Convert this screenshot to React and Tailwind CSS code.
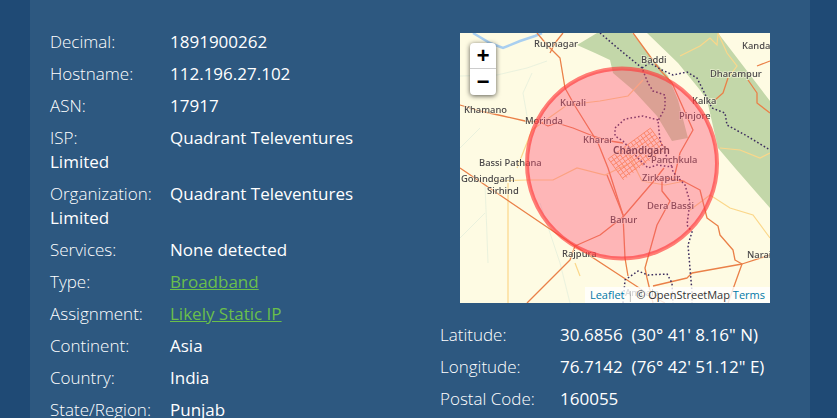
import React from 'react';

const leftRows = [
  ['Decimal:', '1891900262'],
  ['Hostname:', '112.196.27.102'],
  ['ASN:', '17917'],
  ['ISP:', 'Quadrant Televentures Limited'],
  ['Organization:', 'Quadrant Televentures Limited'],
  ['Services:', 'None detected'],
  ['Type:', 'Broadband', true],
  ['Assignment:', 'Likely Static IP', true],
  ['Continent:', 'Asia'],
  ['Country:', 'India'],
  ['State/Region:', 'Punjab'],
];

const rightRows = [
  ['Latitude:', '30.6856\u00a0 (30° 41\' 8.16" N)'],
  ['Longitude:', '76.7142\u00a0 (76° 42\' 51.12" E)'],
  ['Postal Code:', '160055'],
];

const Row = ({ label, value, link }) => (
  <div className="pb-2 leading-6">
    <span className="inline-block w-[120px] font-light">{label}</span>
    {link ? <a className="text-[#6abf4b] underline">{value}</a> : <span>{value}</span>}
  </div>
);

const roads = [
  'M77 0L88 13L100 25L105 55L115 73L138 110L148 135L163 182L165 225L168 243',
  'M103 0L95 10L90 20',
  'M0 72L20 78L43 83L65 88L80 89L88 93L97 90L113 95L133 103L150 108L163 110',
  'M0 135L115 213L167 247L190 262L205 270',
  'M115 213L110 227L67 270',
  'M115 213L140 202L163 184L193 149L204 135',
  'M202 145L202 158L210 168L197 192L185 235L187 245L193 270',
  'M147 142L163 182',
  'M205 145L223 148L240 157L247 185L258 193L260 202L273 217L275 227L282 231L310 222',
  'M193 253L227 245L232 240L282 231L268 270',
  'M173 0L200 37L212 50L233 97L220 120L214 145',
  'M255 67L263 60L268 45',
  'M288 47L297 60L297 70L310 80',
  'M297 33L310 28',
];

const yellowRoads = [
  'M220 23L240 13L250 5L257 12L258 0L267 20L277 33L268 45',
  'M183 47L168 63L140 68L107 72L72 97L57 135',
  'M48 150L48 270',
  'M33 148L67 147L93 147L117 135L145 142L170 130',
  'M260 115L280 117L300 125L310 120',
  'M230 177L250 162L270 175L293 182L310 205',
  'M168 120L182 148L205 152L225 148',
  'M115 230L120 243',
];

const border = [
  'M140 0L160 17L182 35L188 50L193 58L205 62L205 75L198 88L200 107L205 120L212 134',
  'M182 35L190 30L202 37L213 42L227 39L237 45L243 57L252 75L265 80L267 92L287 103L310 117',
  'M198 87L183 83L165 86L155 95L155 103L163 108L177 124L188 135L197 132L212 134L213 139L225 152L230 169L227 192L232 199L228 212L232 259L232 270',
  'M163 270L165 247L178 238L188 242L207 241L212 250L213 270',
];

const labels = [
  ['Rupnagar', 74, 14],
  ['Kandaghat', 282, 16],
  ['Baddi', 181, 30],
  ['Dharampur', 250, 44],
  ['Kurali', 100, 73],
  ['Kalka', 232, 71],
  ['Pinjore', 219, 86],
  ['Khamano', 4, 80],
  ['Morinda', 65, 91],
  ['Kharar', 123, 110],
  ['Panchkula', 191, 130],
  ['Bassi Pathana', 19, 133],
  ['Gobindgarh', 1, 149],
  ['Zirkapur', 182, 148],
  ['Sirhind', 27, 161],
  ['Dera Bassi', 187, 176],
  ['Banur', 150, 190],
  ['Rajpura', 102, 224],
  ['Narain', 287, 225],
  ['Ambala', 165, 263],
];

const grid = [0, 4, 8, 12, 16, 20, 24, 28, 32, 36, 40, 44, 48, 52];

const MapDrawing = () => (
  <svg viewBox="0 0 310 270" className="block h-[270px] w-[310px] bg-[#fefbe3]">
    <g className="blur-[0.4px]">
      <path d="M117 12L137 0L172 0L190 23L208 43L218 67L228 105L212 108L197 83L173 57L153 40L150 27L135 20Z" fill="#c3d7a9" />
      <path d="M187 0L218 30L240 57L247 67L258 115L275 135L310 175L310 68L258 0Z" fill="#c3d7a9" />
      <path d="M13 0L30 10L43 15L60 8L75 3L82 0" fill="none" stroke="#a9cff0" strokeWidth="2.5" />
      <path d="M0 43L37 42L67 35L87 28M72 40L63 60L67 83M0 115L20 95M80 170L100 230L110 270M25 150L28 230M0 205L25 180" fill="none" stroke="#e4efdc" strokeWidth="0.8" />
      {yellowRoads.map((d) => (
        <path key={d} d={d} fill="none" stroke="#fbd78a" strokeWidth="1.2" />
      ))}
      <g transform="rotate(-36 177 121)" stroke="#f8a961" strokeWidth="0.9">
        {grid.map((g) => (
          <path key={g} d={`M${151 + g} 108V134`} />
        ))}
        {grid.slice(0, 7).map((g) => (
          <path key={g} d={`M151 ${108 + g}H203`} />
        ))}
      </g>
      {roads.map((d) => (
        <path key={d} d={d} fill="none" stroke="#ea8048" strokeWidth="1.3" strokeLinejoin="round" />
      ))}
      {border.map((d) => (
        <path key={d} d={d} fill="none" stroke="#3c2c5e" strokeWidth="1.5" strokeDasharray="1.6 2.2" />
      ))}
      <g fontFamily="'Noto Sans', sans-serif" fontSize="9.4" fontWeight="500" fill="#484547" stroke="#fefbe3" strokeWidth="1.6" paintOrder="stroke" strokeOpacity="0.6">
        {labels.map(([name, x, y]) => (
          <text key={name} x={x} y={y}>{name}</text>
        ))}
        <text x="153" y="121" fontSize="10" fontWeight="600" fill="#3c3a3c">Chandigarh</text>
      </g>
    </g>
    <circle cx="162" cy="130.5" r="95" fill="#ff5075" fillOpacity="0.4" stroke="#ff3b3b" strokeOpacity="0.65" strokeWidth="4" />
  </svg>
);

const App = () => (
  <div className="h-[418px] w-[837px] overflow-hidden bg-[#1f4a75] pl-[30px] pr-[27px] text-[17px] text-white [font-family:'Open_Sans',sans-serif]">
    <div className="flex h-full bg-[#2d5880] px-5 pt-[30px]">
      <div className="w-[360px] flex-none">
        {leftRows.map(([label, value, link]) => (
          <Row key={label} label={label} value={value} link={link} />
        ))}
      </div>
      <div className="flex-1 pl-[30px] pt-[3px]">
        <div className="relative ml-5 h-[270px] w-[310px] overflow-hidden">
          <MapDrawing />
          <div className="absolute left-2.5 top-2.5 w-[26px] overflow-hidden rounded bg-white text-black shadow-[0_1px_5px_rgba(0,0,0,0.65)] [font-family:'Liberation_Mono',monospace]">
            <div className="flex h-[26px] items-center justify-center border-b border-[#ccc] pt-1 text-[22px] font-bold leading-none">+</div>
            <div className="flex h-[26px] items-center justify-center pt-1 text-[22px] font-bold leading-none">−</div>
          </div>
          <div className="absolute bottom-0 right-0 h-4 whitespace-nowrap bg-white/80 px-[5px] text-[11px] leading-4 text-[#333]">
            <a className="text-[#0078a8]">Leaflet</a>
            <span className="opacity-40"> | </span>
            © OpenStreetMap <a className="text-[#0078a8]">Terms</a>
          </div>
        </div>
        <div className="mt-5">
          {rightRows.map(([label, value]) => (
            <Row key={label} label={label} value={value} />
          ))}
        </div>
      </div>
    </div>
  </div>
);

export default App;
